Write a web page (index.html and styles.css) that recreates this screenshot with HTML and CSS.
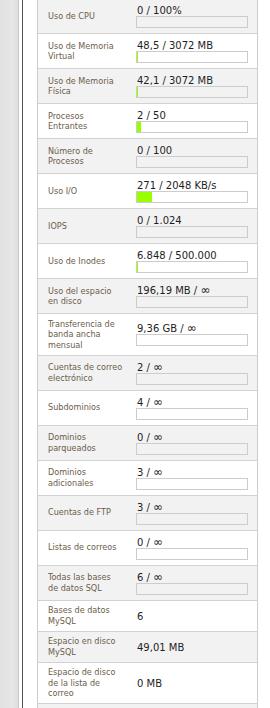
FILE: index.html
```html
<!DOCTYPE html>
<html lang="es">
<head>
<meta charset="utf-8">
<title>Estadísticas</title>
<link rel="stylesheet" href="styles.css">
</head>
<body>
<div class="page">
  <div class="side"></div>
  <div class="content">
    <div class="stats">
      <div class="row"><div class="label">Uso de CPU</div><div class="value"><div class="num">0 / 100%</div><div class="bar"><div class="fill" style="width:0%"></div></div></div></div>
      <div class="row"><div class="label">Uso de Memoria<br>Virtual</div><div class="value"><div class="num">48,5 / 3072 MB</div><div class="bar"><div class="fill" style="width:1px"></div></div></div></div>
      <div class="row"><div class="label">Uso de Memoria<br>Física</div><div class="value"><div class="num">42,1 / 3072 MB</div><div class="bar"><div class="fill" style="width:1px"></div></div></div></div>
      <div class="row"><div class="label">Procesos<br>Entrantes</div><div class="value"><div class="num">2 / 50</div><div class="bar"><div class="fill" style="width:4%"></div></div></div></div>
      <div class="row"><div class="label">Número de<br>Procesos</div><div class="value"><div class="num">0 / 100</div><div class="bar"><div class="fill" style="width:0%"></div></div></div></div>
      <div class="row"><div class="label">Uso I/O</div><div class="value"><div class="num">271 / 2048 KB/s</div><div class="bar"><div class="fill" style="width:13.2%"></div></div></div></div>
      <div class="row"><div class="label">IOPS</div><div class="value"><div class="num">0 / 1.024</div><div class="bar"><div class="fill" style="width:0%"></div></div></div></div>
      <div class="row"><div class="label">Uso de Inodes</div><div class="value"><div class="num">6.848 / 500.000</div><div class="bar"><div class="fill" style="width:1px"></div></div></div></div>
      <div class="row"><div class="label">Uso del espacio<br>en disco</div><div class="value"><div class="num">196,19 MB / <span class="inf">∞</span></div><div class="bar"><div class="fill" style="width:0%"></div></div></div></div>
      <div class="row"><div class="label">Transferencia de<br>banda ancha<br>mensual</div><div class="value"><div class="num">9,36 GB / <span class="inf">∞</span></div><div class="bar"><div class="fill" style="width:0%"></div></div></div></div>
      <div class="row"><div class="label">Cuentas de correo<br>electrónico</div><div class="value"><div class="num">2 / <span class="inf">∞</span></div><div class="bar"><div class="fill" style="width:0%"></div></div></div></div>
      <div class="row"><div class="label">Subdominios</div><div class="value"><div class="num">4 / <span class="inf">∞</span></div><div class="bar"><div class="fill" style="width:0%"></div></div></div></div>
      <div class="row"><div class="label">Dominios<br>parqueados</div><div class="value"><div class="num">0 / <span class="inf">∞</span></div><div class="bar"><div class="fill" style="width:0%"></div></div></div></div>
      <div class="row"><div class="label">Dominios<br>adicionales</div><div class="value"><div class="num">3 / <span class="inf">∞</span></div><div class="bar"><div class="fill" style="width:0%"></div></div></div></div>
      <div class="row"><div class="label">Cuentas de FTP</div><div class="value"><div class="num">3 / <span class="inf">∞</span></div><div class="bar"><div class="fill" style="width:0%"></div></div></div></div>
      <div class="row"><div class="label">Listas de correos</div><div class="value"><div class="num">0 / <span class="inf">∞</span></div><div class="bar"><div class="fill" style="width:0%"></div></div></div></div>
      <div class="row"><div class="label">Todas las bases<br>de datos SQL</div><div class="value"><div class="num">6 / <span class="inf">∞</span></div><div class="bar"><div class="fill" style="width:0%"></div></div></div></div>
      <div class="row"><div class="label">Bases de datos<br>MySQL</div><div class="value"><div class="num">6</div></div></div>
      <div class="row"><div class="label">Espacio en disco<br>MySQL</div><div class="value"><div class="num">49,01 MB</div></div></div>
      <div class="row"><div class="label">Espacio de disco<br>de la lista de<br>correo</div><div class="value"><div class="num">0 MB</div></div></div>
      <div class="row row-empty"></div>
    </div>
  </div>
</div>
</body>
</html>
```

FILE: styles.css
```css
html, body {
  margin: 0;
  padding: 0;
  background: #ffffff;
}

.page {
  display: flex;
  align-items: stretch;
  height: 708px;
  overflow: hidden;
}

.side {
  width: 18px;
  flex: none;
  background: linear-gradient(to right, #e2e2e2, #e6e6e6 70%, #dedede);
  border-right: 1px solid #c9c9c9;
}

.content {
  margin-left: 3px;
  border-left: 1px solid #555555;
  padding-left: 14px;
  flex: none;
  width: 221px;
}

.stats {
  margin-top: -2px;
  border-left: 1px solid #cccccc;
  border-right: 1px solid #cccccc;
  width: 219px;
}

.row {
  display: grid;
  grid-template-columns: 98px 1fr;
  border-top: 1px solid #d2d2d2;
  background: #ffffff;
}

.row:nth-child(odd) {
  background: #f2f2f2;
}

.row-empty {
  height: 30px;
}

.label {
  padding: 4.5px 6px 4.5px 10px;
  align-self: center;
  white-space: nowrap;
  font-family: "DejaVu Sans Condensed", "Liberation Sans", sans-serif;
  font-size: 9px;
  line-height: 10.5px;
  color: #6c5c4a;
}

.value {
  align-self: center;
  padding: 6px 9px 5px 0;
  font-family: "DejaVu Sans", Verdana, sans-serif;
  font-size: 10px;
  line-height: 11px;
  color: #1e1e1e;
}

.num {
  padding-left: 1px;
  white-space: nowrap;
}

.inf {
  font-size: 12px;
  line-height: 10px;
}

.bar {
  height: 10px;
  border: 1px solid #cccccc;
  display: flex;
}

.fill {
  background: #99ff00;
  height: 100%;
}
```
